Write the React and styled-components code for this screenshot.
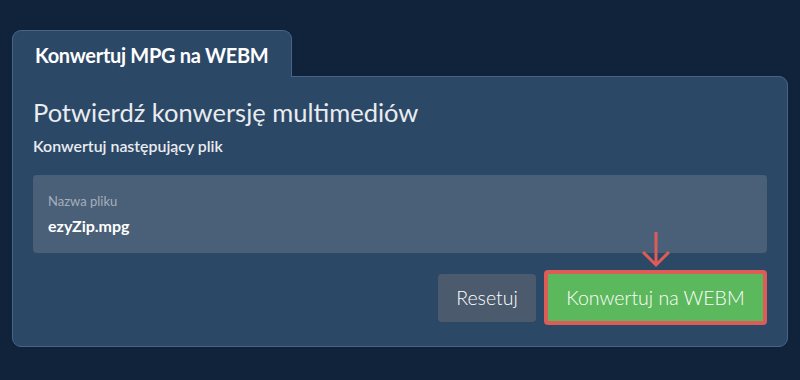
import React from "react";
import styled, { createGlobalStyle } from "styled-components";

const Global = createGlobalStyle`
  html, body { margin: 0; padding: 0; background: #10233a; }
  body { font-family: Lato, "Open Sans", sans-serif; }
`;

const Page = styled.div`
  width: 800px;
  height: 380px;
  box-sizing: border-box;
  padding: 30px 12px 0 12px;
  background: #10233a;
`;

const Widget = styled.div`
  width: 776px;
  display: flex;
  flex-direction: column;
`;

const Tab = styled.div`
  width: 280px;
  height: 47px;
  box-sizing: border-box;
  background: #2c4867;
  border: 1px solid #4a6485;
  border-bottom: none;
  border-radius: 9px 9px 0 0;
  padding: 2px 0 0 22px;
  display: flex;
  align-items: center;
  color: #ffffff;
  font-weight: 700;
  font-size: 20px;
  letter-spacing: -0.3px;
  position: relative;
  z-index: 1;
  margin-bottom: -1px;
`;

const Card = styled.div`
  box-sizing: border-box;
  height: 271px;
  background: #2c4867;
  border: 1px solid #4a6485;
  border-radius: 0 9px 9px 9px;
  padding: 19px 20px 20px 20px;
  display: flex;
  flex-direction: column;
`;

const Title = styled.h1`
  margin: 0;
  font-weight: 400;
  font-size: 25.5px;
  line-height: 32px;
  color: #e9ecef;
`;

const Subtitle = styled.p`
  margin: 8px 0 0 0;
  font-weight: 600;
  font-size: 15.9px;
  line-height: 20px;
  color: #e9ecef;
`;

const FileBox = styled.div`
  margin-top: 19px;
  height: 78px;
  box-sizing: border-box;
  background: #4a5f78;
  border-radius: 4px;
  padding: 17px 15px 0 15px;
  display: flex;
  flex-direction: column;
`;

const FieldLabel = styled.span`
  font-size: 13px;
  line-height: 18px;
  color: #a5afbb;
`;

const FieldValue = styled.span`
  margin-top: 6px;
  font-size: 16px;
  font-weight: 700;
  line-height: 20px;
  color: #ffffff;
`;

const Actions = styled.div`
  margin-top: 17px;
  display: flex;
  justify-content: flex-end;
  align-items: center;
  gap: 8px;
`;

const Button = styled.button`
  box-sizing: border-box;
  height: ${(p) => (p.$highlight ? "55px" : "48px")};
  width: ${(p) => (p.$highlight ? "223px" : "98px")};
  padding: 0;
  border: ${(p) => (p.$highlight ? "4px solid #de5c57" : "none")};
  border-radius: 4px;
  background: ${(p) => (p.$highlight ? "#5cb85c" : "#4b5a6c")};
  color: #ffffff;
  font-family: Lato, "Open Sans", sans-serif;
  font-size: 19.5px;
  font-weight: 300;
  cursor: pointer;
`;

const ButtonWrap = styled.div`
  position: relative;
`;

const Arrow = styled.svg`
  position: absolute;
  left: 50%;
  top: -39px;
  transform: translateX(-50%);
`;

export default function App() {
  return (
    <>
      <Global />
      <Page>
        <Widget>
          <Tab>Konwertuj MPG na WEBM</Tab>
          <Card>
            <Title>Potwierdź konwersję multimediów</Title>
            <Subtitle>Konwertuj następujący plik</Subtitle>
            <FileBox>
              <FieldLabel>Nazwa pliku</FieldLabel>
              <FieldValue>ezyZip.mpg</FieldValue>
            </FileBox>
            <Actions>
              <Button>Resetuj</Button>
              <ButtonWrap>
                <Arrow width="30" height="38" viewBox="0 0 30 38">
                  <path
                    d="M15 1 V34 M2 21 L15 34 L28 21"
                    fill="none"
                    stroke="#de5c57"
                    strokeWidth="3"
                  />
                </Arrow>
                <Button $highlight>Konwertuj na WEBM</Button>
              </ButtonWrap>
            </Actions>
          </Card>
        </Widget>
      </Page>
    </>
  );
}
